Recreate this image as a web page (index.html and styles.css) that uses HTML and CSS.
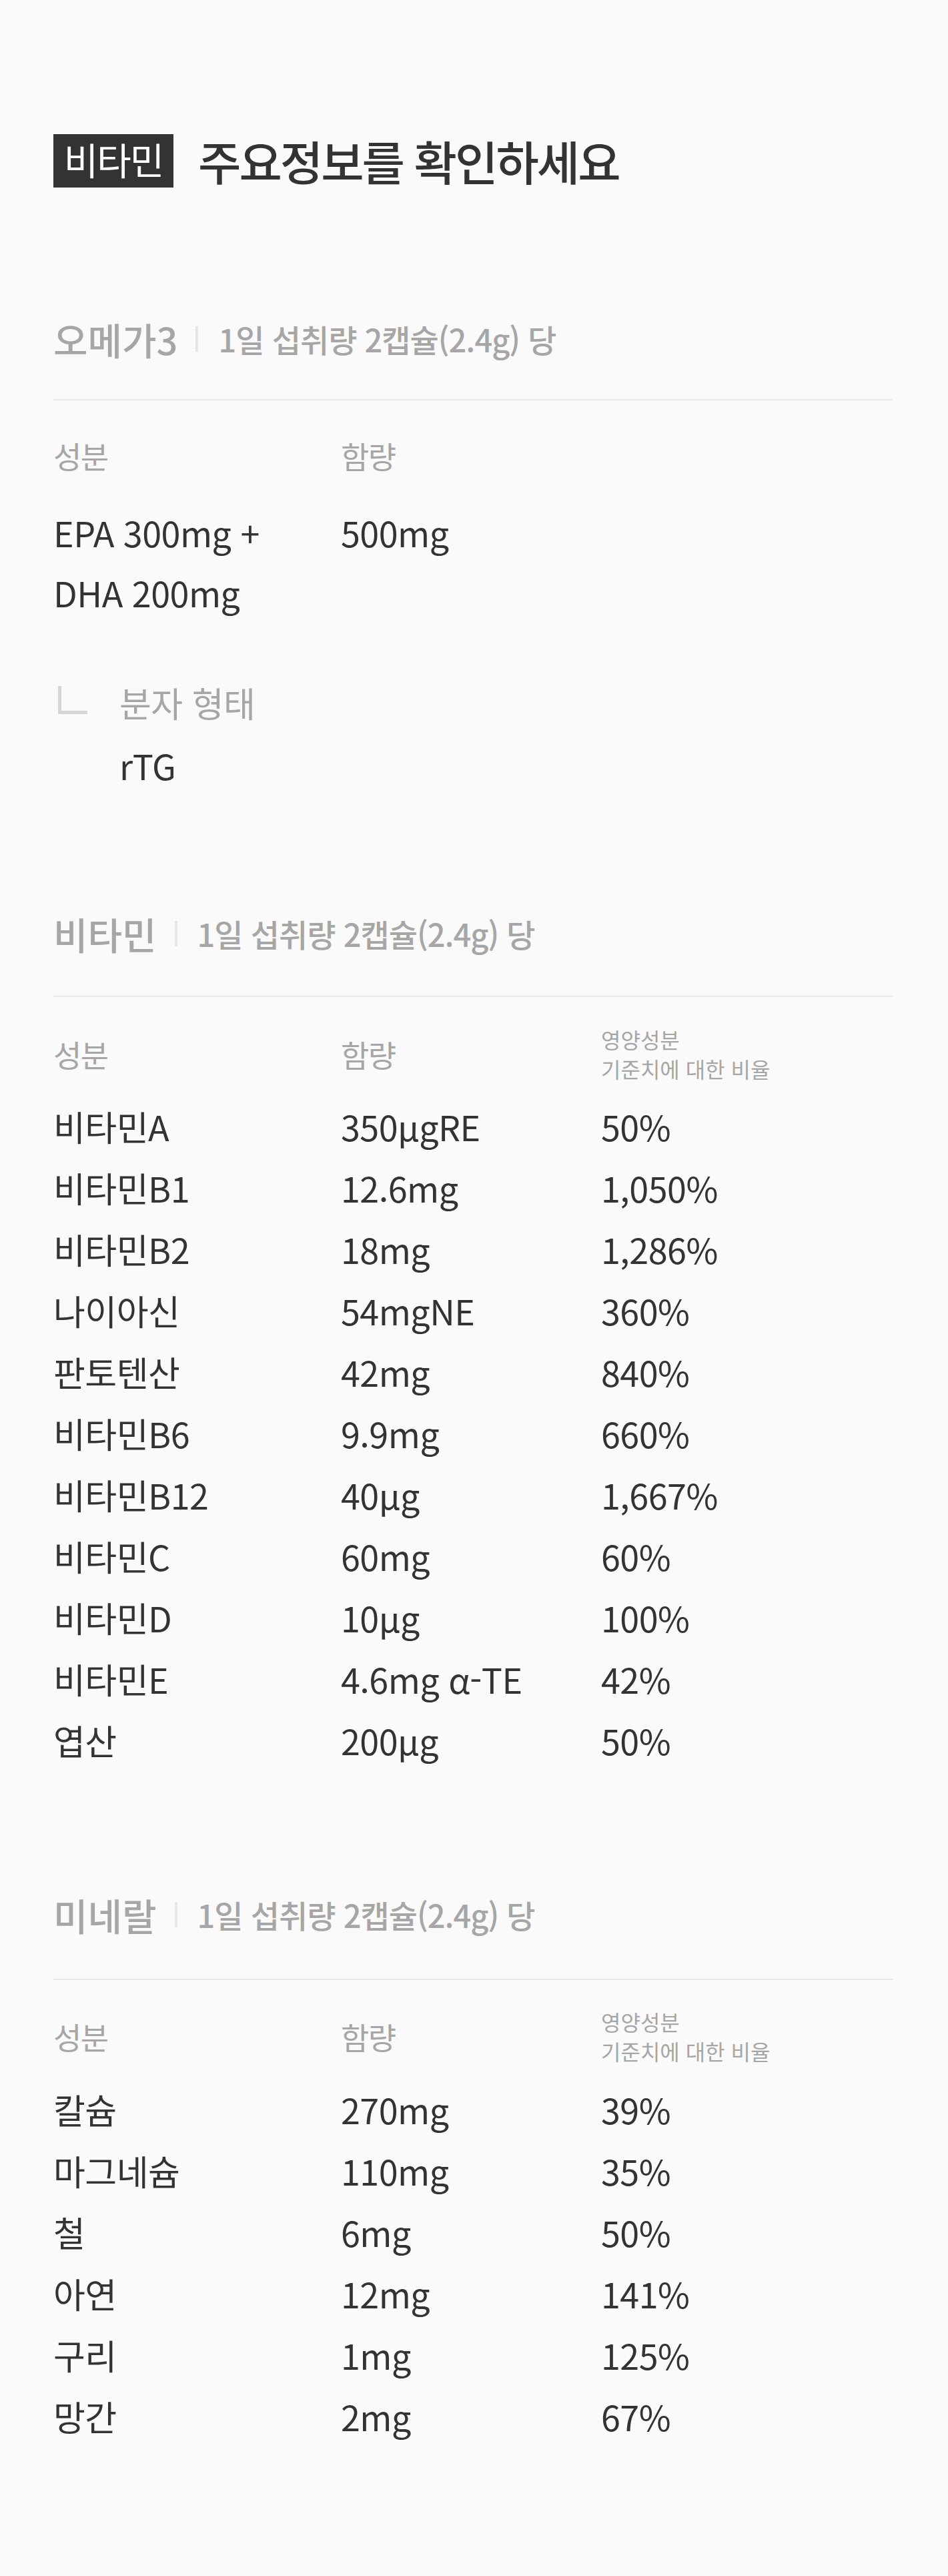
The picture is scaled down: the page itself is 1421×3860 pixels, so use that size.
FILE: index.html
```html
<!DOCTYPE html>
<html lang="ko">
<head>
<meta charset="utf-8">
<title>주요정보를 확인하세요</title>
<link rel="stylesheet" href="styles.css">
</head>
<body>
<div class="page">
  <header class="hero">
    <span class="badge">비타민</span>
    <h1 class="hero-title">주요정보를 확인하세요</h1>
  </header>

  <section class="sec sec-omega">
    <div class="sec-head">
      <span class="sec-name">오메가3</span><span class="sec-bar"></span><span class="sec-sub">1일 섭취량 2캡슐(2.4g) 당</span>
    </div>
    <div class="sec-rule"></div>
    <div class="tbl-head">
      <span class="th">성분</span>
      <span class="th">함량</span>
    </div>
    <div class="omega-row">
      <span class="td">EPA 300mg +<br>DHA 200mg</span>
      <span class="td">500mg</span>
    </div>
    <div class="sub-row">
      <span class="sub-mark"></span>
      <div class="sub-body">
        <div class="sub-label">분자 형태</div>
        <div class="sub-value">rTG</div>
      </div>
    </div>
  </section>

  <section class="sec sec-vitamin">
    <div class="sec-head">
      <span class="sec-name">비타민</span><span class="sec-bar"></span><span class="sec-sub">1일 섭취량 2캡슐(2.4g) 당</span>
    </div>
    <div class="sec-rule"></div>
    <div class="tbl-head">
      <span class="th">성분</span>
      <span class="th">함량</span>
      <span class="th th-small">영양성분<br>기준치에 대한 비율</span>
    </div>
    <div class="rows">
      <div class="row"><span>비타민A</span><span>350μgRE</span><span>50%</span></div>
      <div class="row"><span>비타민B1</span><span>12.6mg</span><span>1,050%</span></div>
      <div class="row"><span>비타민B2</span><span>18mg</span><span>1,286%</span></div>
      <div class="row"><span>나이아신</span><span>54mgNE</span><span>360%</span></div>
      <div class="row"><span>판토텐산</span><span>42mg</span><span>840%</span></div>
      <div class="row"><span>비타민B6</span><span>9.9mg</span><span>660%</span></div>
      <div class="row"><span>비타민B12</span><span>40μg</span><span>1,667%</span></div>
      <div class="row"><span>비타민C</span><span>60mg</span><span>60%</span></div>
      <div class="row"><span>비타민D</span><span>10μg</span><span>100%</span></div>
      <div class="row"><span>비타민E</span><span>4.6mg α-TE</span><span>42%</span></div>
      <div class="row"><span>엽산</span><span>200μg</span><span>50%</span></div>
    </div>
  </section>

  <section class="sec sec-mineral">
    <div class="sec-head">
      <span class="sec-name">미네랄</span><span class="sec-bar"></span><span class="sec-sub">1일 섭취량 2캡슐(2.4g) 당</span>
    </div>
    <div class="sec-rule"></div>
    <div class="tbl-head">
      <span class="th">성분</span>
      <span class="th">함량</span>
      <span class="th th-small">영양성분<br>기준치에 대한 비율</span>
    </div>
    <div class="rows">
      <div class="row"><span>칼슘</span><span>270mg</span><span>39%</span></div>
      <div class="row"><span>마그네슘</span><span>110mg</span><span>35%</span></div>
      <div class="row"><span>철</span><span>6mg</span><span>50%</span></div>
      <div class="row"><span>아연</span><span>12mg</span><span>141%</span></div>
      <div class="row"><span>구리</span><span>1mg</span><span>125%</span></div>
      <div class="row"><span>망간</span><span>2mg</span><span>67%</span></div>
    </div>
  </section>
</div>
</body>
</html>
```

FILE: styles.css
```css
* { box-sizing: border-box; }

html, body {
  margin: 0;
  padding: 0;
  background: #fafafa;
}

body {
  font-family: "Noto Sans CJK KR", "Noto Sans", sans-serif;
  color: #333;
}

.page {
  width: 1421px;
  min-height: 3860px;
  padding: 201px 83px 193px 80px;
}

/* hero */
.hero {
  display: flex;
  align-items: center;
  height: 80px;
}

.badge {
  display: flex;
  align-items: center;
  justify-content: center;
  width: 180px;
  height: 80px;
  padding-bottom: 8px;
  background: #333;
  color: #fff;
  font-size: 56px;
  font-weight: 400;
  letter-spacing: -2px;
}

.hero-title {
  margin: 0 0 0 37px;
  font-size: 70px;
  line-height: 80px;
  font-weight: 500;
  letter-spacing: -3px;
  color: #333;
}

/* section header */
.sec-omega { margin-top: 187px; }
.sec-vitamin { margin-top: 165px; }
.sec-mineral { margin-top: 175px; }

.sec-head {
  display: flex;
  align-items: center;
  height: 80px;
  color: #a6a6a6;
}

.sec-name {
  font-size: 56px;
  font-weight: 500;
  line-height: 80px;
  letter-spacing: 0;
}

.sec-bar {
  width: 4px;
  height: 38px;
  margin: 0 30px 0 27px;
  background: #e6e6e6;
}

.sec-sub {
  font-size: 47px;
  font-weight: 500;
  line-height: 80px;
  letter-spacing: -1px;
}

.sec-rule {
  height: 2px;
  background: #e9e9e9;
}

.sec-omega .sec-rule { margin-top: 50px; }
.sec-vitamin .sec-rule { margin-top: 53px; }
.sec-mineral .sec-rule { margin-top: 56px; }

/* table head */
.tbl-head {
  display: grid;
  grid-template-columns: 431px 390px 1fr;
  align-items: center;
  height: 84px;
  color: #a6a6a6;
}

.sec-omega .tbl-head { margin-top: 40px; }
.sec-vitamin .tbl-head { margin-top: 41px; }
.sec-mineral .tbl-head { margin-top: 40px; }

.th {
  font-size: 46px;
  line-height: 84px;
  letter-spacing: -1.5px;
}

.th-small {
  font-size: 32px;
  line-height: 44px;
  letter-spacing: 0;
}

/* omega body */
.omega-row {
  display: grid;
  grid-template-columns: 431px 390px 1fr;
  margin-top: 29px;
  font-size: 52px;
  line-height: 90px;
  letter-spacing: -0.5px;
}

.sub-row {
  display: flex;
  align-items: flex-start;
  margin-top: 73px;
}

.sub-mark {
  flex: none;
  width: 44px;
  height: 42px;
  margin: 22px 0 0 7px;
  border-left: 5px solid #d6d6d6;
  border-bottom: 5px solid #d6d6d6;
}

.sub-body {
  margin-left: 48px;
  font-size: 52px;
  line-height: 94px;
  letter-spacing: -0.5px;
}

.sub-label { color: #a6a6a6; }
.sub-value { color: #333; }

/* rows */
.sec-vitamin .rows { margin-top: 23px; }
.sec-mineral .rows { margin-top: 24px; }

.row {
  display: grid;
  grid-template-columns: 431px 390px 1fr;
  height: 92px;
  font-size: 52px;
  line-height: 92px;
  letter-spacing: -0.5px;
  color: #333;
}
```
